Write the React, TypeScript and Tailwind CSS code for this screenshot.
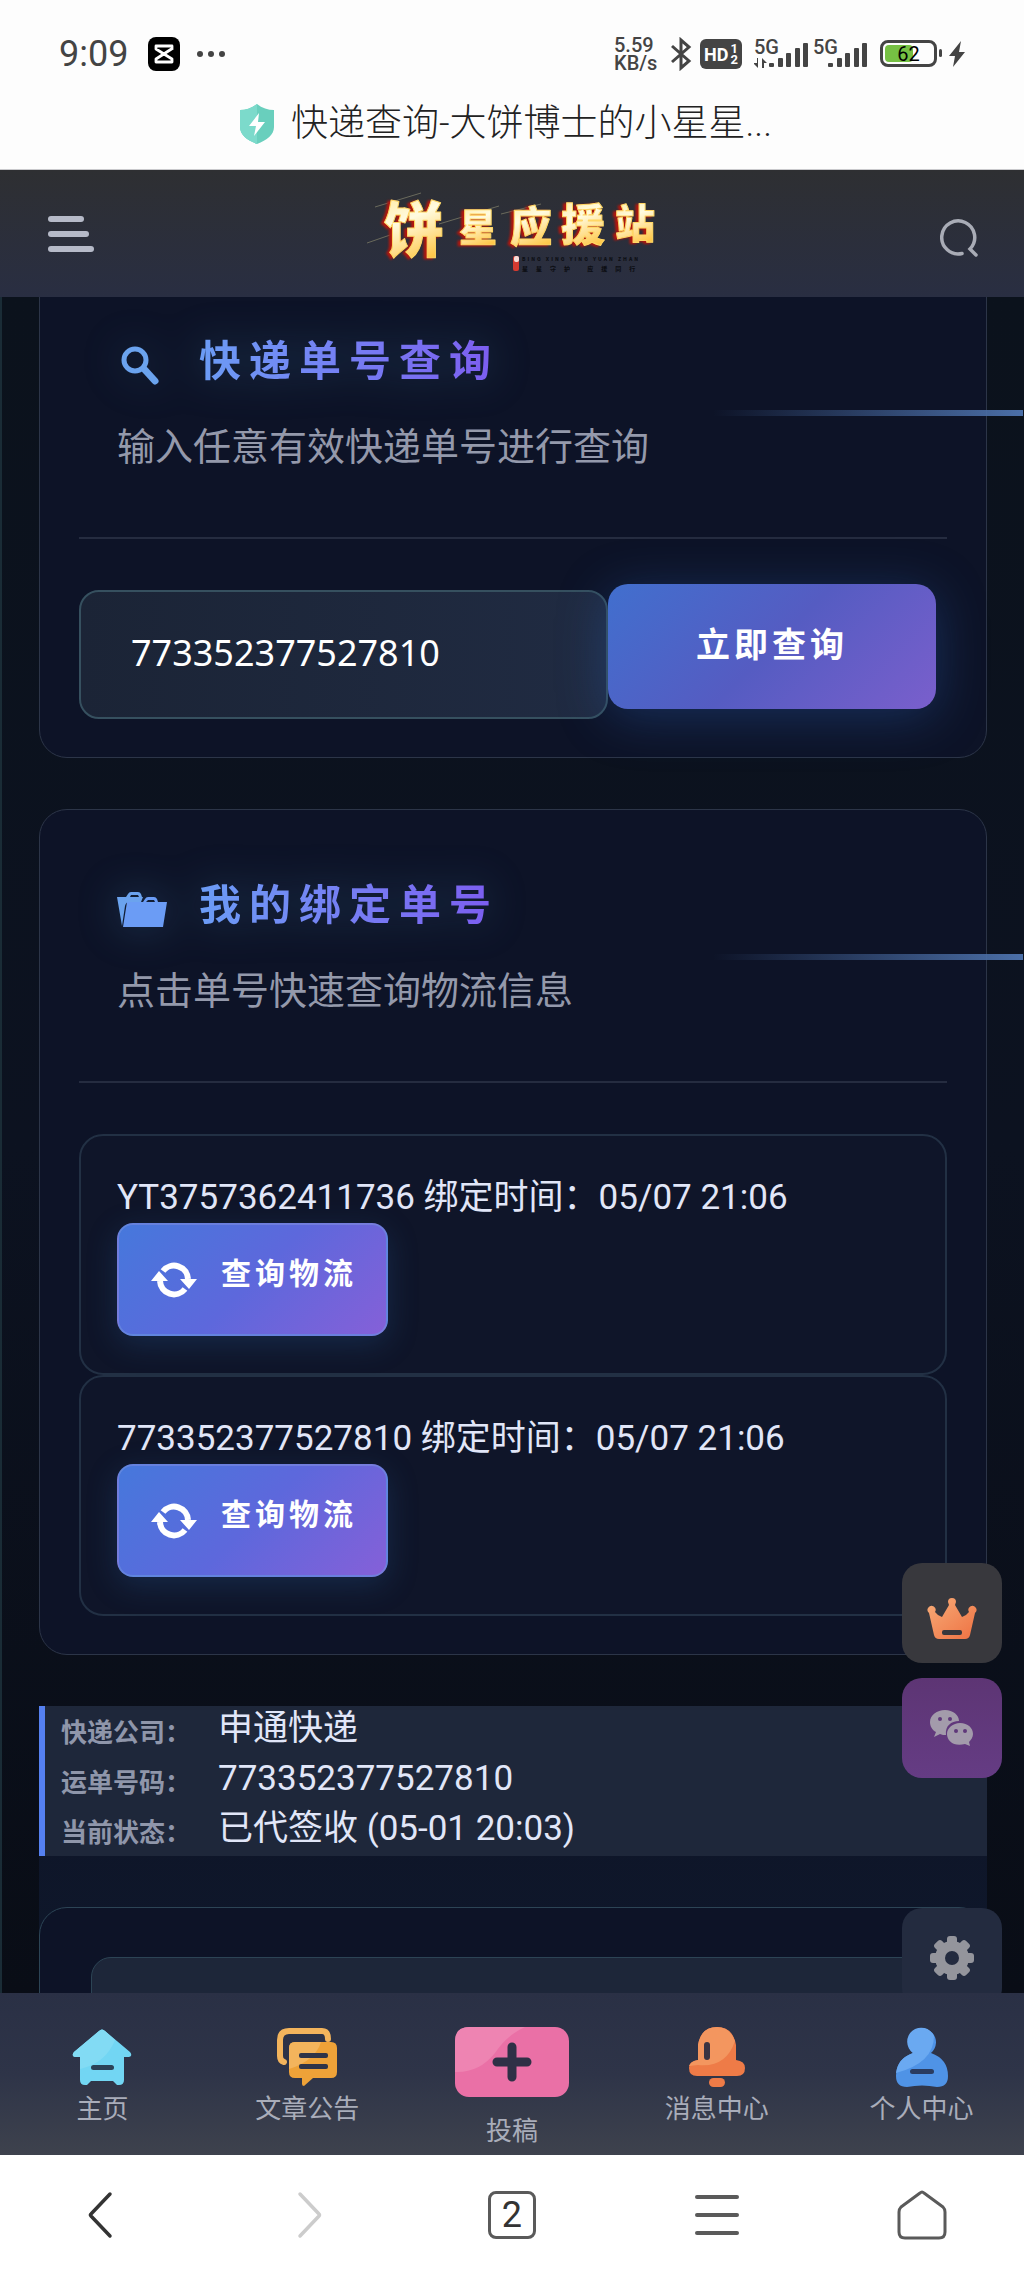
import { useState } from 'react'
import type { ReactNode } from 'react'

interface BoundParcel {
  number: string
  boundAt: string
}

const parcels: BoundParcel[] = [
  { number: 'YT3757362411736', boundAt: '05/07 21:06' },
  { number: '773352377527810', boundAt: '05/07 21:06' }
]

const details = [
  { label: '快递公司', value: '申通快递' },
  { label: '运单号码', value: '773352377527810' },
  { label: '当前状态', value: '已代签收 (05-01 20:03)' }
]

function Signal({ arrows }: { arrows?: boolean }) {
  return (
    <span className="relative block w-[55px] h-[30px]">
      <span className="absolute left-0 top-0 text-[20px] leading-[16px] font-medium">5G</span>
      <svg viewBox="0 0 55 30" className="w-full h-full" fill="#444">
        {arrows && <path d="M3 19v5H-1l5 5v-10zM8 29v-10l5 5H10v5z" />}
        <rect x="15" y="24" width="5" height="4" rx="1" />
        <rect x="24" y="19" width="5" height="9" rx="1" />
        <rect x="32" y="14" width="5" height="14" rx="1" />
        <rect x="41" y="9" width="5" height="19" rx="1" />
        <rect x="49" y="4" width="5" height="24" rx="1" />
      </svg>
    </span>
  )
}

function StatusBar() {
  return (
    <div className="h-[107px] px-[59px] flex items-center justify-between text-[#444]">
      <div className="flex items-center">
        <span className="text-[36px] leading-[40px]">9:09</span>
        <svg viewBox="0 0 32 34" className="w-8 h-[34px] ml-5">
          <rect width="32" height="34" rx="8" fill="#000" />
          <path d="M25 11 8 22v3h16v-3L8 12V9h16v3" fill="none" stroke="#fff" strokeWidth="2.800" strokeLinejoin="round" />
        </svg>
        <svg viewBox="0 0 32 8" className="w-8 h-2 ml-4" fill="#444">
          <circle cx="4" cy="4" r="3" />
          <circle cx="15" cy="4" r="3" />
          <circle cx="26" cy="4" r="3" />
        </svg>
      </div>
      <div className="flex items-center gap-2">
        <span className="text-[20px] leading-[18px] font-medium w-12">
          5.59
          <br />
          KB/s
        </span>
        <svg viewBox="0 0 22 34" className="w-[22px] h-[34px]" fill="none" stroke="#444" strokeWidth="3">
          <path d="M2 9l17 15-8 7V3l8 7L2 25" />
        </svg>
        <span className="relative block w-[42px] h-[30px] mr-1 rounded-md bg-[#444] text-white font-bold">
          <span className="absolute left-1 top-2 text-[18px] leading-[16px]">HD</span>
          <span className="absolute right-1 top-1 text-[13px] leading-[11px]">
            1
            <br />
            2
          </span>
        </span>
        <Signal arrows />
        <span className="-ml-1">
          <Signal />
        </span>
        <span className="relative flex items-center justify-center w-[57px] h-[27px] ml-1 rounded-lg border-[3px] border-[#444] text-[20px] leading-[20px] text-black">
          <span className="absolute left-0.5 top-0.5 bottom-0.5 w-7 rounded-sm bg-[#76c043]" />
          <span className="relative">62</span>
          <span className="absolute -right-2 top-1.5 w-[3px] h-2 rounded-sm bg-[#444]" />
        </span>
        <svg viewBox="0 0 16 26" className="w-4 h-[26px] ml-1" fill="#444">
          <path d="M12 0 0 15h6L4 26 16 11h-6z" />
        </svg>
      </div>
    </div>
  )
}

function PageTitle() {
  return (
    <div className="h-[63px] pb-7 pr-3 flex items-center justify-center gap-[17px] border-b border-[#c9c9cc]">
      <svg viewBox="0 0 34 40" className="w-[34px] h-10">
        <path d="M17 0c5 4 11 6 17 6v17c0 8-7 13-17 17C7 36 0 31 0 23V6c6 0 12-2 17-6z" fill="#69cfbd" />
        <path d="M17 0C12 4 6 6 0 6v17c0 8 7 13 17 17z" fill="#7cdacb" />
        <path d="M19 9 9 22h7l-2 10 11-14h-7z" fill="#fff" />
      </svg>
      <span className="text-[37px] leading-[40px] font-light text-[#222]">快递查询-大饼博士的小星星...</span>
    </div>
  )
}

function Logo() {
  return (
    <svg viewBox="0 0 300 100" className="w-[300px] h-[100px]" role="img" aria-label="饼星应援站">
      <defs>
        <linearGradient id="gold" x1="0" y1="0" x2="0.3" y2="1">
          <stop offset="0" stopColor="#ffe58a" />
          <stop offset="0.5" stopColor="#fffbe0" />
          <stop offset="1" stopColor="#ffc84a" />
        </linearGradient>
      </defs>
      <path d="M8 21 54 7M0 57l26-9M72 38l60-18M134 28l40-10" stroke="#6a6a5c" strokeWidth="1" />
      <g
        className="font-black drop-shadow-[-3px_1px_1px_#b3160c]"
        fontFamily="'Noto Sans CJK SC', sans-serif"
        strokeLinejoin="round"
        fill="url(#gold)"
        stroke="#ffd765"
        strokeWidth="1"
      >
        <text x="17" y="66" fontSize="60">饼</text>
        <text x="92" y="55" fontSize="38">星</text>
        <text x="143" y="56" fontSize="42">应</text>
        <text x="194" y="55" fontSize="44">援</text>
        <text x="248" y="52" fontSize="40">站</text>
      </g>
      <rect x="146" y="70" width="6" height="15" rx="2" fill="#d43a30" />
      <rect x="147" y="70" width="5" height="6" rx="2" fill="#f6dcd8" />
      <g fill="#0d0e14" fontFamily="'Noto Sans CJK SC', sans-serif" fontWeight="900">
        <text x="155" y="75" fontSize="5" letterSpacing="2">BING XING YING YUAN ZHAN</text>
        <text x="155" y="85" fontSize="6" letterSpacing="8">星星守护 应援同行</text>
      </g>
    </svg>
  )
}

function SiteHeader() {
  return (
    <header className="h-[127px] shrink-0 pl-12 pr-[46px] flex items-center justify-between bg-linear-to-b from-[#2e2f32] to-[#292e42]">
      <button aria-label="菜单" className="w-[46px] flex flex-col gap-[9px]">
        <span className="h-[6px] w-9 rounded-full bg-[#b6bac8]" />
        <span className="h-[6px] w-[41px] rounded-full bg-[#b6bac8]" />
        <span className="h-[6px] w-full rounded-full bg-[#b6bac8]" />
      </button>
      <a href="#home" className="pt-1">
        <Logo />
      </a>
      <button aria-label="搜索" className="pt-2">
        <svg viewBox="0 0 38 38" className="w-[38px] h-[38px]" fill="none" stroke="#a9acb6" strokeWidth="3.500" strokeLinecap="round">
          <path d="M22 34.500A16.500 16.500 0 1 1 30 30l6 6" />
        </svg>
      </button>
    </header>
  )
}

function SearchIcon() {
  return (
    <svg viewBox="0 0 50 50" className="w-[50px] h-[58px] pt-2" fill="none" strokeLinecap="round">
      <circle cx="18" cy="19" r="11" stroke="#6ba3ee" strokeWidth="5" />
      <path d="M28 29 38 40" stroke="#6ba3ee" strokeWidth="7" />
    </svg>
  )
}

function FolderIcon() {
  return (
    <svg viewBox="0 0 50 50" className="w-[50px] h-[58px] pt-2">
      <path d="M0 12h9l2-3q1-2 3-2h7q2 0 3 2l1 3h1l-2 5H12q-3 0-4 4L5 41zM13 12h9l-1-2h-7z" fill="#6ba3ee" fillRule="evenodd" />
      <path d="M10 17h16l2-3q1-2 3-2h6q2 0 3 2l1 3h9l-4 25H6zM29 17h9l-1-2h-6z" fill="#6b9cf5" fillRule="evenodd" />
    </svg>
  )
}

function RefreshIcon() {
  return (
    <svg viewBox="0 0 46 36" className="w-[46px] h-9">
      <g fill="none" stroke="#fff" strokeWidth="6">
        <path d="M12 9A14 14 0 0 1 37 17" />
        <path d="M34 27A14 14 0 0 1 9 19" />
      </g>
      <path d="M29 17h17l-8 10zM17 19H0l8-10z" fill="#fff" />
    </svg>
  )
}

interface PanelProps {
  icon: ReactNode
  title: string
  subtitle: string
  children: ReactNode
}

function Panel({ icon, title, subtitle, children }: PanelProps) {
  return (
    <section className="relative rounded-[28px] border border-[#2c3548] bg-[#0d1327] px-[39px] py-[38px]">
      <div className="px-[38px] pt-7 pb-[60px] border-b-2 border-[#252c40]">
        <h2 className="flex items-center gap-8 h-[60px] drop-shadow-[0_0_20px_rgba(70,140,190,0.3)]">
          {icon}
          <span className="text-[42px] leading-[60px] font-bold tracking-[8px] text-transparent bg-clip-text bg-linear-to-r from-[#6b9cf5] to-[#7c5cf0]">
            {title}
          </span>
        </h2>
        <p className="mt-[25px] text-[38px] leading-[60px] text-[#9499ab]">{subtitle}</p>
      </div>
      {/* light trail running off the right edge */}
      <span className="absolute top-36 -right-[37px] w-[310px] h-[6px] bg-linear-to-r from-transparent to-[#4b6fa8]" />
      <div className="mt-[51px]">{children}</div>
    </section>
  )
}

function ParcelItem({ parcel }: { parcel: BoundParcel }) {
  return (
    <li className="rounded-3xl border-2 border-[#223044] bg-[#0f1529] px-9 py-[37px]">
      <p className="text-[35px] leading-[50px] text-[#e1e6f8]">
        {parcel.number} 绑定时间：{parcel.boundAt}
      </p>
      <button className="flex items-center h-[113px] w-[271px] pl-8 gap-6 rounded-2xl border-2 border-[#6f8fe0]/60 bg-linear-[135deg] from-[#4678dc] via-[#5d68dc] to-[#8560d8] shadow-[0_8px_30px_rgba(40,90,150,0.3)]">
        <RefreshIcon />
        <span className="pb-3 text-[30px] leading-[40px] font-bold tracking-[4px] text-white">查询物流</span>
      </button>
    </li>
  )
}

function FloatingTools() {
  return (
    <div className="absolute right-[22px] -bottom-[15px] flex flex-col">
      <button aria-label="会员" className="w-[100px] h-[100px] rounded-[20px] bg-[#38383d] flex items-center justify-center">
        <svg viewBox="0 0 50 46" className="w-[50px] h-[46px] mt-2">
          <defs>
            <linearGradient id="crown" x1="0" y1="0" x2="1" y2="1">
              <stop offset="0" stopColor="#f7ac78" />
              <stop offset="1" stopColor="#ee7142" />
            </linearGradient>
          </defs>
          <path d="M21 8a4 4 0 1 1 8 0l-1 3 7 12q5-2 7-5a4 4 0 1 1 6 1l-5 22q-1 4-5 4H12q-4 0-5-4L2 19a4 4 0 1 1 6-1q2 3 7 5l7-12zM17 36q-2 0-2 2v1q0 2 2 2h16q2 0 2-2v-1q0-2-2-2z" fill="url(#crown)" fillRule="evenodd" />
        </svg>
      </button>
      <button aria-label="微信" className="mt-[15px] w-[100px] h-[100px] rounded-[20px] bg-linear-to-b from-[#5d3574] to-[#653c84] flex items-center justify-center">
        <svg viewBox="0 0 44 36" className="w-11 h-9">
          <path d="M15 0c8 0 14 5 14 11-8 0-14 5-13 14-2 0-4 0-6-1l-6 3 2-5C2 20 0 16 0 12 0 5 7 0 15 0z" fill="#a39bab" />
          <path d="M30 13c8 0 13 5 13 11 0 3-2 6-4 8l1 4-5-2c-11 3-18-3-18-10 0-6 6-11 13-11z" fill="#a39bab" />
          <g fill="#5f387a">
            <circle cx="10" cy="9" r="2" />
            <circle cx="20" cy="9" r="2" />
            <circle cx="26" cy="21" r="2" />
            <circle cx="35" cy="21" r="2" />
          </g>
        </svg>
      </button>
      <button aria-label="设置" className="mt-[130px] w-[100px] h-[100px] rounded-[20px] bg-[#232b3f] flex items-center justify-center">
        <svg viewBox="0 0 44 44" className="w-11 h-11">
          <g fill="#94959c">
            <circle cx="22" cy="22" r="17" />
            <rect x="17" y="0" width="10" height="44" rx="3" />
            <rect x="17" y="0" width="10" height="44" rx="3" transform="rotate(45 22 22)" />
            <rect x="17" y="0" width="10" height="44" rx="3" transform="rotate(90 22 22)" />
            <rect x="17" y="0" width="10" height="44" rx="3" transform="rotate(135 22 22)" />
          </g>
          <circle cx="22" cy="22" r="7" fill="#232b3f" />
        </svg>
      </button>
    </div>
  )
}

function HomeIcon() {
  return (
    <svg viewBox="0 0 60 60" className="w-[60px] h-[60px]">
      <path d="M27 4q3-3 6 0l25 21q3 4-1 5h-5v23q0 5-5 5h-2l-4-4H19l-4 4h-2q-5 0-5-5V30H3q-4-1-1-5z" fill="#72d6f3" />
      <path d="M27 4q3-3 6 0l10 9Q34 36 8 42V30H3q-4-1-1-5z" fill="#82dbf4" />
      <rect x="19" y="38" width="23" height="5" rx="2.500" fill="#2b4257" />
    </svg>
  )
}

function PostsIcon() {
  return (
    <svg viewBox="0 0 60 60" className="w-[60px] h-[60px]">
      <path d="M7 35q-4-1-4-6V13Q3 4 12 4h33q6 0 6 8" fill="none" stroke="#f3b45c" strokeWidth="6" strokeLinecap="round" />
      <path d="M18 15h36q6 0 6 6v24q0 6-6 6H36l-9 8q-2 0-2-2v-6h-7q-6 0-6-6V21q0-6 6-6z" fill="#eea238" />
      <path d="M18 15h26Q38 34 12 42V21q0-6 6-6z" fill="#f3b45c" />
      <rect x="22" y="26" width="29" height="5" rx="2" fill="#2f3448" />
      <rect x="22" y="37" width="29" height="5" rx="2" fill="#2f3448" />
    </svg>
  )
}

function BellIcon() {
  return (
    <svg viewBox="0 0 60 60" className="w-[60px] h-[60px]">
      <path d="M11 33V18Q14 0 30 0t19 18v15q9 1 9 8 0 8-8 8H10q-8 0-8-8 0-7 9-8z" fill="#ee7b47" />
      <path d="M11 33V18Q14 0 30 0q13 0 18 14-9 27-37 24l-9 1q2-5 9-6z" fill="#f3965f" />
      <rect x="17" y="15" width="6" height="18" rx="3" fill="#3a3442" />
      <rect x="22" y="51" width="16" height="9" rx="4.500" fill="#ee7b47" />
    </svg>
  )
}

function UserIcon() {
  return (
    <svg viewBox="0 0 60 60" className="w-[60px] h-[60px]">
      <path d="M21 26a14 14 0 1 1 18 0q17 6 17 23 0 11-11 11-15-3-30 0Q4 60 4 49q0-17 17-23z" fill="#4f93e6" />
      <path d="M21 26a14 14 0 1 1 21-17Q42 36 4 46q2-15 17-20z" fill="#6aa9f1" />
      <rect x="18" y="42" width="24" height="5" rx="2.500" fill="#2a3c60" />
    </svg>
  )
}

function PublishIcon() {
  return (
    <svg viewBox="0 0 114 70" className="w-[114px] h-[70px]">
      <rect width="114" height="70" rx="14" fill="#ea70a6" />
      <path d="M14 0h56Q52 8 40 26 24 46 0 45V14Q0 0 14 0z" fill="#ee84b2" />
      <path d="M57 20v30M42 35h30" stroke="#2f3046" strokeWidth="9" strokeLinecap="round" />
    </svg>
  )
}

const navItems = [
  { label: '主页', href: '#home', icon: <HomeIcon /> },
  { label: '文章公告', href: '#posts', icon: <PostsIcon /> },
  { label: '投稿', href: '#publish', icon: <PublishIcon /> },
  { label: '消息中心', href: '#messages', icon: <BellIcon /> },
  { label: '个人中心', href: '#me', icon: <UserIcon /> }
]

function TabBar() {
  return (
    <nav className="h-[162px] shrink-0 pt-[34px] grid grid-cols-5 items-start bg-linear-to-b from-[#2a3045] via-[#2e3448] to-[#3e424d]">
      {navItems.map((item) => (
        <a key={item.label} href={item.href} className="flex flex-col items-center gap-[7px] text-[26px] leading-[30px] text-[#a9adba]">
          {item.icon}
          <span className={item.label === '投稿' ? 'pt-3' : ''}>{item.label}</span>
        </a>
      ))}
    </nav>
  )
}

function BrowserBar() {
  return (
    <div className="h-[120px] shrink-0 grid grid-cols-5 items-center justify-items-center bg-white">
      <button aria-label="后退">
        <svg viewBox="0 0 50 50" className="w-[50px] h-[50px]" fill="none" stroke="#333" strokeWidth="3.500" strokeLinecap="round" strokeLinejoin="round">
          <path d="M33 4 14 24q-1 1 0 2l19 20" />
        </svg>
      </button>
      <button aria-label="前进">
        <svg viewBox="0 0 50 50" className="w-[50px] h-[50px]" fill="none" stroke="#ccc" strokeWidth="3.500" strokeLinecap="round" strokeLinejoin="round">
          <path d="M18 4 37 24q1 1 0 2L18 46" />
        </svg>
      </button>
      <button className="w-12 h-12 rounded-lg border-[3px] border-[#5a5a5a] text-[36px] leading-[40px] text-[#333]">2</button>
      <button aria-label="更多" className="w-11 flex flex-col gap-[14px]">
        <span className="h-1 w-full rounded-full bg-[#5a5a5a]" />
        <span className="h-1 w-full rounded-full bg-[#5a5a5a]" />
        <span className="h-1 w-full rounded-full bg-[#5a5a5a]" />
      </button>
      <button aria-label="主屏">
        <svg viewBox="0 0 50 50" className="w-[50px] h-[50px]" fill="none" stroke="#5a5a5a" strokeWidth="3" strokeLinejoin="round">
          <path d="M23 3q2-2 4 0l19 14q2 2 2 5v20q0 6-6 6H8q-6 0-6-6V22q0-3 2-5z" />
        </svg>
      </button>
    </div>
  )
}

export default function App() {
  const [trackingNo, setTrackingNo] = useState('773352377527810')

  return (
    <div lang="zh-CN" className="h-screen flex flex-col bg-[#fdfdfd] font-[Roboto,'Noto_Sans_CJK_SC',sans-serif]">
      <StatusBar />
      <PageTitle />
      <SiteHeader />

      <main className="relative flex-1 min-h-0 overflow-hidden border-l-2 border-[#1a2c36] bg-linear-to-b from-[#0b121c] via-[#0c1220] to-[#090d16]">
        {/* the page is scrolled a little, so the first panel starts under the header */}
        <div className="-mt-8 px-[37px] flex flex-col gap-[51px]">
          <Panel icon={<SearchIcon />} title="快递单号查询" subtitle="输入任意有效快递单号进行查询">
            <form className="flex items-start pr-[11px]" onSubmit={(e) => e.preventDefault()}>
              <input
                aria-label="快递单号"
                value={trackingNo}
                onChange={(e) => setTrackingNo(e.target.value)}
                className="flex-1 min-w-0 h-[129px] px-[50px] pb-1 rounded-[20px] border-2 border-[#36505f] bg-linear-to-r from-[#1b2436] to-[#202b42] text-[36px] text-white outline-none font-['Noto_Sans',sans-serif]"
              />
              <button className="-mt-1.5 w-[328px] h-[125px] pb-1 rounded-[20px] bg-linear-[135deg] from-[#416fce] via-[#555cc2] to-[#7a5fcc] text-[34px] leading-[48px] font-bold tracking-[4px] text-white shadow-[0_8px_50px_rgba(40,90,170,0.4)]">
                立即查询
              </button>
            </form>
          </Panel>

          <Panel icon={<FolderIcon />} title="我的绑定单号" subtitle="点击单号快速查询物流信息">
            <ul>
              {parcels.map((parcel) => (
                <ParcelItem key={parcel.number} parcel={parcel} />
              ))}
            </ul>
          </Panel>

          <div className="bg-linear-to-b from-[#0e1428] to-[#0f1a2c]">
            <dl className="border-l-[6px] border-[#5580f0] bg-[#1e273a] pl-4">
              {details.map((row) => (
                <div key={row.label} className="flex items-center h-[50px]">
                  <dt className="w-[157px] pt-1 text-[26px] leading-[40px] font-bold text-[#8f96aa]">{row.label}：</dt>
                  <dd className="pb-1 text-[35px] leading-[46px] text-[#e1e6f8]">{row.value}</dd>
                </div>
              ))}
            </dl>
            <div className="mt-[51px] h-[240px] rounded-[28px] border border-[#2c4455] bg-[#0d1327] px-[51px] pt-[49px]">
              <div className="h-full rounded-t-[20px] border border-[#2c4455] bg-[#1d2639]" />
            </div>
          </div>
        </div>
        <FloatingTools />
      </main>

      <TabBar />
      <BrowserBar />
    </div>
  )
}
